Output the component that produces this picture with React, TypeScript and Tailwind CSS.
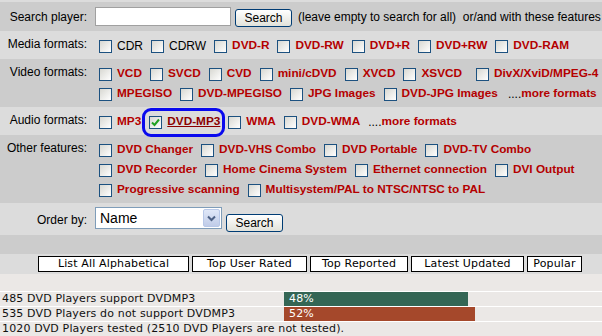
import type { ReactNode } from 'react';

const RED = 'font-bold text-[11.8px] text-[#b40000]';

function Box({ checked = false }: { checked?: boolean }) {
  return (
    <span className="w-[13px] h-[13px] shrink-0 border border-[#1c5180] bg-linear-to-br from-[#d8d8d2] to-white flex items-center justify-center">
      {checked && (
        <svg width="9" height="9" viewBox="0 0 9 9">
          <polyline points="1,4.5 3.5,7 8,1.5" fill="none" stroke="#21a121" strokeWidth="2" />
        </svg>
      )}
    </span>
  );
}

function Opt({ children, plain = false, first = false, extra = '' }: { children: ReactNode; plain?: boolean; first?: boolean; extra?: string }) {
  return (
    <span className={`flex items-center h-[20px] ${first ? 'ml-[4px]' : ''} mr-[8px] ${extra}`}>
      <Box />
      <span className={`ml-[5px] ${plain ? 'text-[12px] text-black' : RED}`}>{children}</span>
    </span>
  );
}

function More() {
  return (
    <span className="flex items-center h-[20px]">
      <span className="text-[12px] text-black">....</span>
      <span className={RED}>more formats</span>
    </span>
  );
}

function Row({ label, dark, children }: { label: string; dark?: boolean; children: ReactNode }) {
  return (
    <div className={`flex pt-[5px] pb-[3px] ${dark ? 'bg-[#cccccc]' : 'bg-[#dcdcdc]'}`}>
      <div className="w-[95px] shrink-0 pr-[8px] text-right text-[12px] leading-[17px] text-black">{label}</div>
      <div className="flex-1 flex flex-col">{children}</div>
    </div>
  );
}

function Line({ children }: { children: ReactNode }) {
  return <div className="flex items-center h-[20px] whitespace-nowrap">{children}</div>;
}

function XpButton() {
  return (
    <button className="h-[18px] w-[57px] rounded-[3px] border border-[#003c74] bg-linear-to-b from-white to-[#e2e2da] text-[12px] leading-[16px] text-black">
      Search
    </button>
  );
}

const tabs: [string, string][] = [
  ['List All Alphabetical', 'w-[151px]'],
  ['Top User Rated', 'w-[115px]'],
  ['Top Reported', 'w-[98px]'],
  ['Latest Updated', 'w-[113px]'],
  ['Popular', 'w-[55px]'],
];

export default function App() {
  return (
    <div className="w-[602px] h-[336px] overflow-hidden bg-[#ebe8e6] font-['Liberation_Sans',Arial,sans-serif]">
      <div className="h-[2px] bg-[#dcdcdc]" />

      {/* Search */}
      <div className="flex items-center h-[29px] bg-[#cccccc] whitespace-nowrap">
        <div className="w-[95px] shrink-0 pr-[8px] text-right text-[12px]">Search player:</div>
        <input className="w-[136px] h-[19px] border border-[#a0a0a0] bg-white outline-none" />
        <div className="ml-[4px]">
          <XpButton />
        </div>
        <span className="ml-[6px] text-[12px] text-black">(leave empty to search for all)&nbsp; or/and with these features</span>
      </div>

      <Row label="Media formats:">
        <Line>
          <Opt plain first>CDR</Opt>
          <Opt plain>CDRW</Opt>
          <Opt>DVD-R</Opt>
          <Opt>DVD-RW</Opt>
          <Opt>DVD+R</Opt>
          <Opt>DVD+RW</Opt>
          <Opt>DVD-RAM</Opt>
        </Line>
      </Row>

      <Row label="Video formats:" dark>
        <Line>
          <Opt first>VCD</Opt>
          <Opt>SVCD</Opt>
          <Opt>CVD</Opt>
          <Opt>mini/cDVD</Opt>
          <Opt>XVCD</Opt>
          <Opt extra="mr-[14px]">XSVCD</Opt>
          <Opt>DivX/XviD/MPEG-4</Opt>
        </Line>
        <Line>
          <Opt first>MPEGISO</Opt>
          <Opt>DVD-MPEGISO</Opt>
          <Opt>JPG Images</Opt>
          <Opt extra="mr-[10px]">DVD-JPG Images</Opt>
          <More />
        </Line>
      </Row>

      <Row label="Audio formats:">
        <Line>
          <Opt first>MP3</Opt>
          <span className="relative flex items-center h-[20px] mr-[8px]">
            <Box checked />
            <span className="ml-[5px] font-bold text-[11.8px] text-[#8b0000] underline">DVD-MP3</span>
            <span className="absolute -left-[7px] -right-[5px] -top-[4px] -bottom-[5px] border-[3px] border-[#0a0aee] rounded-[9px]" />
          </span>
          <Opt>WMA</Opt>
          <Opt extra="mr-[4px]">DVD-WMA</Opt>
          <More />
        </Line>
      </Row>

      <Row label="Other features:" dark>
        <Line>
          <Opt first>DVD Changer</Opt>
          <Opt>DVD-VHS Combo</Opt>
          <Opt>DVD Portable</Opt>
          <Opt>DVD-TV Combo</Opt>
        </Line>
        <Line>
          <Opt first>DVD Recorder</Opt>
          <Opt>Home Cinema System</Opt>
          <Opt>Ethernet connection</Opt>
          <Opt>DVI Output</Opt>
        </Line>
        <Line>
          <Opt first>Progressive scanning</Opt>
          <Opt>Multisystem/PAL to NTSC/NTSC to PAL</Opt>
        </Line>
      </Row>

      {/* Order by */}
      <div className="flex h-[32px] bg-[#dcdcdc]">
        <div className="w-[95px] shrink-0 pr-[8px] pt-[8px] text-right text-[12px]">Order by:</div>
        <div className="mt-[4px] flex w-[127px] h-[22px] border border-[#7f9db9] bg-white">
          <span className="flex-1 pl-[4px] text-[14px] leading-[20px] text-black">Name</span>
          <span className="w-[17px] m-[1px] rounded-[2px] border border-[#b8c8e8] bg-linear-to-b from-[#e0e8f8] to-[#c0cce8] flex items-center justify-center">
            <svg width="9" height="7" viewBox="0 0 9 7">
              <polyline points="1,1.5 4.5,5 8,1.5" fill="none" stroke="#4d6185" strokeWidth="2" />
            </svg>
          </span>
        </div>
        <div className="ml-[4px] mt-[7px]">
          <XpButton />
        </div>
      </div>

      <div className="h-[19px] bg-[#cccccc]" />

      {/* Tabs */}
      <div className="flex items-center h-[20px] bg-[#dcdcdc] pl-[38px] gap-[3px] font-['DejaVu_Sans',Verdana,sans-serif] tracking-[0.15px]">
        {tabs.map(([t, w]) => (
          <div key={t} className={`${w} h-[16px] border border-black bg-white text-center text-[11px] leading-[14px] text-black`}>
            {t}
          </div>
        ))}
      </div>

      {/* Stats */}
      <div className="pt-[17px] font-['DejaVu_Sans',Verdana,sans-serif] text-[11px] tracking-[0.15px] text-[#111]">
        <div className="flex h-[15px] border-t border-white">
          <div className="w-[284px] pl-[2px] leading-[14px]">485 DVD Players support DVDMP3</div>
          <div className="w-[184px] bg-[#346655] pl-[5px] leading-[14px] text-white">48%</div>
        </div>
        <div className="flex h-[15px] border-t border-white">
          <div className="w-[284px] pl-[2px] leading-[14px]">535 DVD Players do not support DVDMP3</div>
          <div className="w-[191px] bg-[#a5482b] pl-[5px] leading-[14px] text-white">52%</div>
        </div>
        <div className="h-[15px] border-t border-white pl-[2px] leading-[14px]">
          1020 DVD Players tested (2510 DVD Players are not tested).
        </div>
      </div>
    </div>
  );
}
